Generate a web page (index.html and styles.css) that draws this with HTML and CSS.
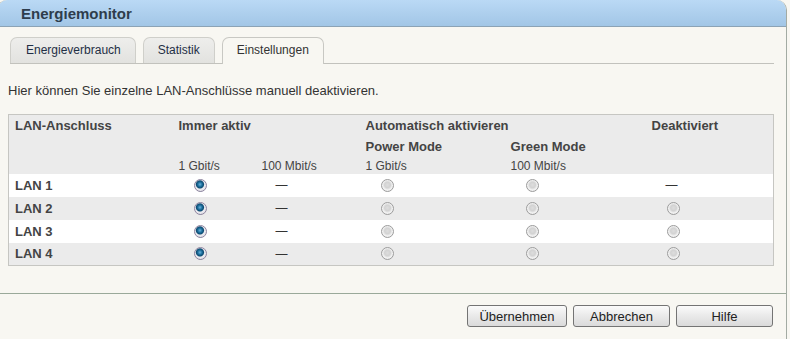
FILE: index.html
```html
<!DOCTYPE html>
<html lang="de">
  <head>
    <meta charset="UTF-8" />
    <title>Energiemonitor</title>
    <link rel="stylesheet" href="styles.css">
  </head>
  <body>
    <div class="window">
      <div class="titlebar">Energiemonitor</div>

      <div class="content">
        <ul class="tabs">
          <li class="tab">Energieverbrauch</li>
          <li class="tab">Statistik</li>
          <li class="tab active">Einstellungen</li>
        </ul>

        <p class="intro">Hier können Sie einzelne LAN-Anschlüsse manuell deaktivieren.</p>

        <table class="lan">
          <colgroup>
            <col class="c-name">
            <col class="c-gbit">
            <col class="c-mbit">
            <col class="c-power">
            <col class="c-green">
            <col class="c-off">
          </colgroup>
          <thead>
            <tr class="head-main">
              <th>LAN-Anschluss</th>
              <th colspan="2">Immer aktiv</th>
              <th colspan="2">Automatisch aktivieren</th>
              <th>Deaktiviert</th>
            </tr>
            <tr class="head-mode">
              <th></th>
              <th></th>
              <th></th>
              <th>Power Mode</th>
              <th>Green Mode</th>
              <th></th>
            </tr>
            <tr class="head-speed">
              <th></th>
              <th>1 Gbit/s</th>
              <th>100 Mbit/s</th>
              <th>1 Gbit/s</th>
              <th>100 Mbit/s</th>
              <th></th>
            </tr>
          </thead>
          <tbody>
            <tr>
              <td class="name">LAN 1</td>
              <td><input type="radio" name="lan1" checked></td>
              <td><span class="dash">—</span></td>
              <td><input type="radio" name="lan1"></td>
              <td><input type="radio" name="lan1"></td>
              <td><span class="dash">—</span></td>
            </tr>
            <tr>
              <td class="name">LAN 2</td>
              <td><input type="radio" name="lan2" checked></td>
              <td><span class="dash">—</span></td>
              <td><input type="radio" name="lan2"></td>
              <td><input type="radio" name="lan2"></td>
              <td><input type="radio" name="lan2"></td>
            </tr>
            <tr>
              <td class="name">LAN 3</td>
              <td><input type="radio" name="lan3" checked></td>
              <td><span class="dash">—</span></td>
              <td><input type="radio" name="lan3"></td>
              <td><input type="radio" name="lan3"></td>
              <td><input type="radio" name="lan3"></td>
            </tr>
            <tr>
              <td class="name">LAN 4</td>
              <td><input type="radio" name="lan4" checked></td>
              <td><span class="dash">—</span></td>
              <td><input type="radio" name="lan4"></td>
              <td><input type="radio" name="lan4"></td>
              <td><input type="radio" name="lan4"></td>
            </tr>
          </tbody>
        </table>
      </div>

      <div class="footer">
        <button class="btn btn-apply">Übernehmen</button>
        <button class="btn">Abbrechen</button>
        <button class="btn">Hilfe</button>
      </div>
    </div>
  </body>
</html>
```

FILE: styles.css
```css
/* General styles */
html,
body {
  height: 100%;
}

body {
  margin: 0;
  padding: 0;
  background-color: #f8f7f2;
  font-family: "Liberation Sans", Arial, sans-serif;
  font-size: 12px;
  color: #333;
  overflow: hidden;
}

.window {
  width: 790px;
  margin-left: -3px;
  height: 100%;
  box-sizing: border-box;
  background-color: #f8f7f2;
  border-right: 1px solid #a3aba3;
  border-left: 1px solid #a3aba3;
  border-radius: 10px 10px 0 0;
  overflow: hidden;
}

/* Title bar */
.titlebar {
  height: 26px;
  line-height: 28px;
  padding-left: 23px;
  background: linear-gradient(to bottom, #bad9f5, #a2c6e6);
  border-bottom: 1px solid #8ca3b5;
  font-size: 15px;
  font-weight: bold;
  color: #2e3d4c;
}

.content {
  padding: 10px 12px 0 12px;
}

/* Tabs */
.tabs {
  list-style: none;
  margin: 0;
  padding: 0;
  display: flex;
  gap: 7px;
  border-bottom: 1px solid #c2c2bd;
  height: 26px;
}

.tab {
  height: 25px;
  line-height: 24px;
  padding: 0 14px;
  background: linear-gradient(to bottom, #eeeeec, #e2e2df);
  border: 1px solid #cfcfca;
  border-bottom: none;
  border-radius: 7px 7px 0 0;
  color: #1f2f45;
}

.tab:first-child {
  padding: 0 14px 0 15px;
}

.tab.active {
  height: 26px;
  background: #f8f7f2;
  border-color: #c8c8c3;
  color: #333;
}

.intro {
  margin: 18px 0 15px -2px;
  line-height: 17px;
  font-size: 13px;
  color: #333;
}

/* LAN table */
.lan {
  margin-left: -2px;
  width: 765px;
  table-layout: fixed;
  border-collapse: collapse;
  border: 1px solid #c6c6c2;
  color: #444;
}

.c-name { width: 164px; }
.c-gbit { width: 83px; }
.c-mbit { width: 104px; }
.c-power { width: 145px; }
.c-green { width: 141px; }
.c-off { width: 128px; }

.lan th,
.lan td {
  padding: 0 6px;
  text-align: left;
  vertical-align: middle;
}

.lan thead tr {
  background-color: #ebebeb;
}

.head-main {
  height: 22px;
}

.head-main th,
.head-mode th {
  font-size: 13px;
  font-weight: bold;
}

.head-mode {
  height: 19px;
}

.head-speed {
  height: 18px;
}

.head-speed th {
  font-size: 12px;
  font-weight: normal;
  padding-top: 2px;
}

.lan tbody tr {
  height: 23px;
  background-color: #fff;
}

.lan tbody tr:nth-child(even) {
  background-color: #ebebeb;
}

.lan td.name {
  font-weight: bold;
  font-size: 13px;
}

.dash {
  display: inline-block;
  margin-left: 14px;
  color: #333;
}

/* Radio buttons */
.lan input[type="radio"] {
  -webkit-appearance: none;
  appearance: none;
  display: block;
  margin: 0 0 0 15px;
  width: 13px;
  height: 13px;
  border-radius: 50%;
  border: 1px solid #9c9c9c;
  background: radial-gradient(circle at 50% 45%, #dedede 0%, #d2d2d2 35%, #f2f2f2 60%, #e4e4e4 100%);
}

.lan input[type="radio"]:checked {
  border-color: #8f86a0;
  background: radial-gradient(circle at 45% 40%, #6ab4dc 0%, #1b6d9b 25%, #0e4c72 40%, #ecebf0 52%, #d8d6e0 100%);
}

/* Footer */
.footer {
  margin-top: 27px;
  border-top: 1px solid #9aa99a;
  padding: 11px 13px 0 0;
  display: flex;
  justify-content: flex-end;
  gap: 6px;
}

.btn {
  height: 22px;
  width: 97px;
  padding: 0;
  font-family: "Liberation Sans", Arial, sans-serif;
  font-size: 13px;
  color: #222;
  background: linear-gradient(to bottom, #fbfbfb, #e9e9e9 50%, #dadada);
  border: 1px solid #747474;
  border-radius: 3px;
}

.btn-apply {
  width: 100px;
}
```
